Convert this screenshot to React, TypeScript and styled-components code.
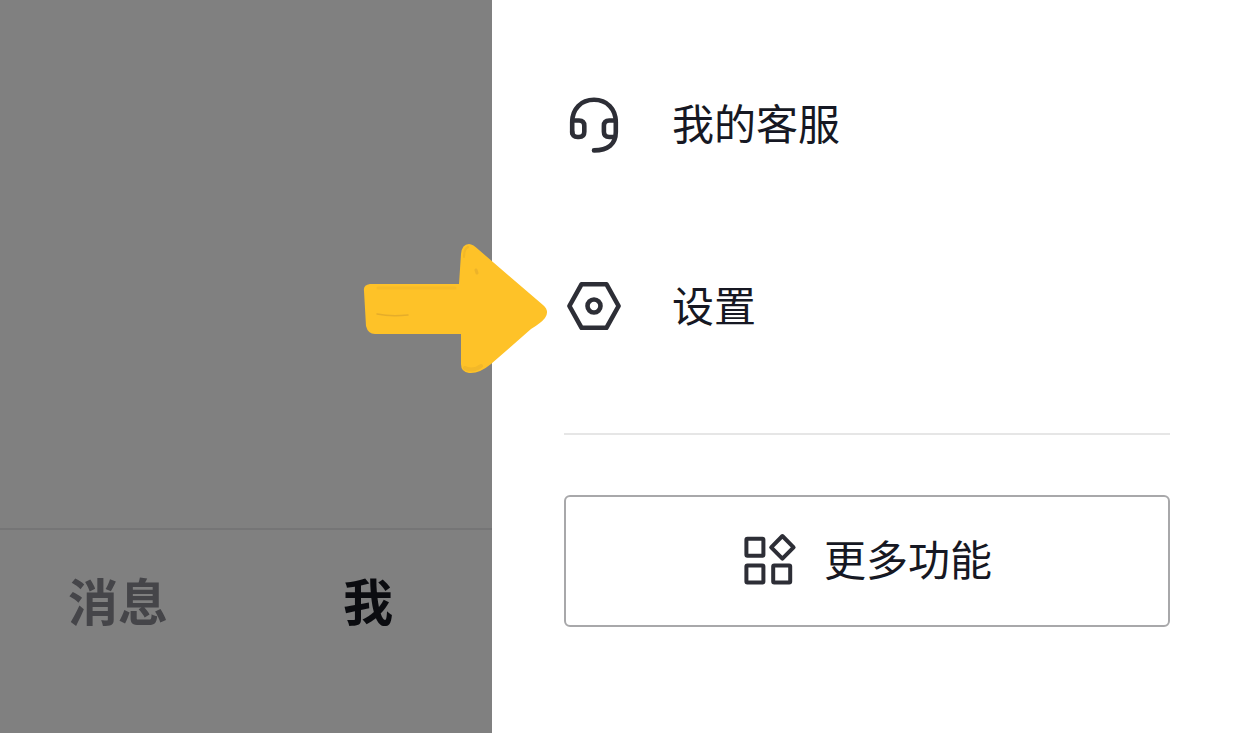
import React from "react";
import styled, { createGlobalStyle } from "styled-components";

const GlobalStyle = createGlobalStyle`
  *, *::before, *::after { box-sizing: border-box; }
  body {
    margin: 0;
    background: #fff;
    color: #161823;
    font-family: "Noto Sans CJK SC", "Noto Sans", sans-serif;
  }
`;

const Screen = styled.div`
  display: grid;
  grid-template-columns: 492fr 750fr;
  min-height: 100vh;
`;

const DimmedPage = styled.div`
  display: flex;
  flex-direction: column;
  justify-content: flex-end;
  background: #808080;
`;

const TabBar = styled.nav`
  display: flex;
  justify-content: space-between;
  padding: 33px 99px 98px 68px;
  border-top: 2px solid #757576;
`;

const Tab = styled.a<{ $active?: boolean }>`
  color: ${(p) => (p.$active ? "#0b0c10" : "#454549")};
  font-size: 50px;
  line-height: 72px;
  font-weight: 700;
  text-decoration: none;
`;

const Drawer = styled.aside`
  padding: 34px 72px;
  background: #fff;
`;

const Menu = styled.ul`
  margin: 0;
  padding: 0 0 35px;
  list-style: none;
  border-bottom: 2px solid #e6e6e6;
`;

const MenuItem = styled.li`
  position: relative;
`;

const MenuLink = styled.a`
  display: flex;
  align-items: center;
  gap: 48px;
  height: 182px;
  color: inherit;
  text-decoration: none;
`;

const Label = styled.span`
  padding-bottom: 6px;
  font-size: 42px;
  line-height: 60px;
`;

const Icon = styled.svg`
  flex: none;
  overflow: visible;
  fill: none;
  stroke: #2d2e36;
  stroke-width: 4.6;
  stroke-linecap: round;
  stroke-linejoin: round;
`;

const Pointer = styled.svg`
  position: absolute;
  top: 24px;
  right: 100%;
  width: 192px;
  height: 136px;
  margin-right: 12px;
  pointer-events: none;
`;

const MoreButton = styled.button`
  display: flex;
  align-items: center;
  justify-content: center;
  gap: 28px;
  width: 100%;
  height: 132px;
  margin-top: 60px;
  padding: 0 0 0 2px;
  border: 2px solid #a8a8aa;
  border-radius: 6px;
  background: #fff;
  color: inherit;
  font: inherit;
`;

function HeadsetIcon() {
  return (
    <Icon width="60" height="60" viewBox="0 0 60 60" aria-hidden="true">
      <path d="M8.2 38V27C8.2 14 17 4.8 30 4.8S51.8 14 51.8 27V37C51.8 49 44 55.4 30 55.4" />
      <path d="M8.2 25.5H15Q20.3 25.5 20.3 30.8V36.7Q20.3 42 15 42H13.5Q8.2 42 8.2 36.7" />
      <path d="M51.8 25.5H45.2Q39.9 25.5 39.9 30.8V36.7Q39.9 42 45.2 42H50.8" />
    </Icon>
  );
}

function SettingsIcon() {
  return (
    <Icon width="60" height="60" viewBox="0 0 60 60" aria-hidden="true">
      <path d="M17.6 7.2H42.4L54.6 29L42.4 50.8H17.6L5.4 29Z" />
      <circle cx="30" cy="29" r="6.5" />
    </Icon>
  );
}

function AppsIcon() {
  return (
    <Icon width="52" height="52" viewBox="0 0 52 52" aria-hidden="true">
      <g strokeWidth="4">
        <rect x="2.4" y="3.8" width="17" height="17" rx="1" />
        <rect x="2.4" y="30.6" width="17" height="17" rx="1" />
        <rect x="29.2" y="30.6" width="17" height="17" rx="1" />
        <path d="M38.4 1L49.6 12.3L38.4 23.6L27.2 12.3Z" />
      </g>
    </Icon>
  );
}

function ArrowPointer() {
  return (
    <Pointer viewBox="0 0 192 136" aria-hidden="true">
      <path
        fill="#fec228"
        d="M10 44L99 44L101 14Q102 4 109 4Q113 4 119 10L183 65Q190 71 185 78Q181 83 171 89L131 124Q119 134 109 133Q101 132 101 124L101 94L15 94Q8 94 6 86L4 51Q3 45 10 44Z"
      />
      <g fill="none" stroke="#d9a32c" strokeLinecap="round" opacity="0.65">
        <path d="M17 74Q31 77 48 75" strokeWidth="1.5" />
        <path d="M116 30L117 33" strokeWidth="3" opacity="0.7" />
        <path d="M108 7Q104 9 104 17" strokeWidth="2" opacity="0.5" />
        <path d="M105 128Q113 132 121 126" strokeWidth="4" opacity="0.5" />
        <path d="M18 48H95" strokeWidth="3" opacity="0.3" />
      </g>
    </Pointer>
  );
}

export default function App() {
  return (
    <>
      <GlobalStyle />
      <Screen>
        <DimmedPage>
          <TabBar>
            <Tab href="#messages">消息</Tab>
            <Tab href="#me" $active aria-current="page">
              我
            </Tab>
          </TabBar>
        </DimmedPage>
        <Drawer>
          <Menu>
            <MenuItem>
              <MenuLink href="#service">
                <HeadsetIcon />
                <Label>我的客服</Label>
              </MenuLink>
            </MenuItem>
            <MenuItem>
              <MenuLink href="#settings">
                <SettingsIcon />
                <Label>设置</Label>
              </MenuLink>
              <ArrowPointer />
            </MenuItem>
          </Menu>
          <MoreButton type="button">
            <AppsIcon />
            <Label>更多功能</Label>
          </MoreButton>
        </Drawer>
      </Screen>
    </>
  );
}
